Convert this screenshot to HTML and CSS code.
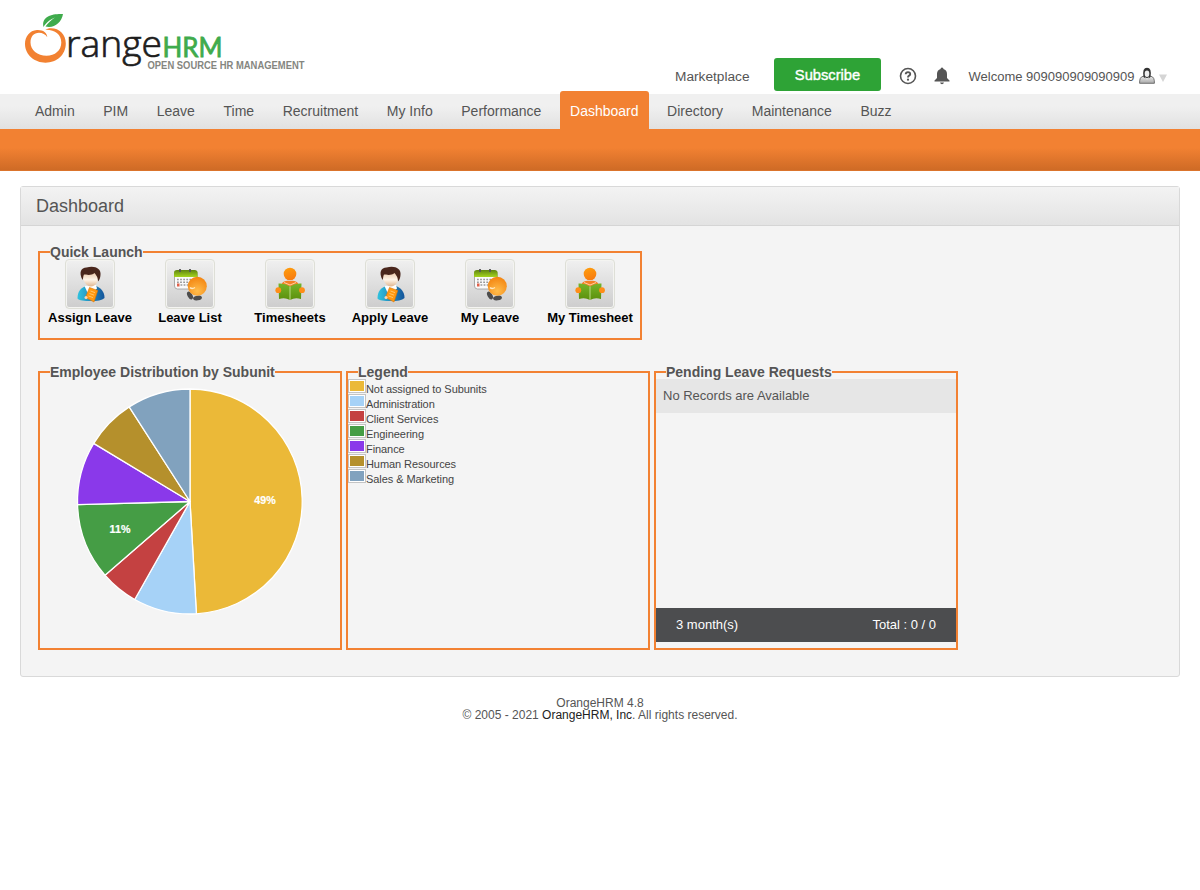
FILE: index.html
```html
<!DOCTYPE html>
<html lang="en">
<head>
<meta charset="utf-8">
<title>OrangeHRM</title>
<link rel="stylesheet" href="styles.css">
</head>
<body>
<svg class="defs" width="0" height="0">
  <defs>
    <linearGradient id="gOrange" x1="0" y1="0" x2="0.3" y2="1"><stop offset="0" stop-color="#ff9f0c"/><stop offset="1" stop-color="#f87d10"/></linearGradient>
    <radialGradient id="gBall" cx=".5" cy=".75" r=".75"><stop offset="0" stop-color="#ffbd4c"/><stop offset="1" stop-color="#f3830f"/></radialGradient>
    <linearGradient id="gGreen" x1="0" y1="0" x2="0" y2="1"><stop offset="0" stop-color="#76b52a"/><stop offset="1" stop-color="#5c8f0c"/></linearGradient>
    <linearGradient id="gCal" x1="0" y1="0" x2="0" y2="1"><stop offset="0" stop-color="#5e8510"/><stop offset="1" stop-color="#a5d51f"/></linearGradient>
    <linearGradient id="gBlue" x1="0" y1="0" x2="1" y2="0"><stop offset="0" stop-color="#30c3df"/><stop offset="1" stop-color="#14549a"/></linearGradient>
    <linearGradient id="gSkin" x1="0" y1="0" x2="0" y2="1"><stop offset="0" stop-color="#dfb48f"/><stop offset=".6" stop-color="#fff4e8"/><stop offset="1" stop-color="#dfb58f"/></linearGradient>
    <linearGradient id="gUser" x1="0" y1="0" x2="0" y2="1"><stop offset="0" stop-color="#eee"/><stop offset="1" stop-color="#aaa"/></linearGradient>
  </defs>
  <symbol id="person" viewBox="0 0 48 48">
    <path d="M11.500 38.500C11.500 31 15 28 20 26L30 26C34.500 28 38.500 31 38.500 38C36 40.500 31 41 25 41C18 41 13 40.500 11.500 38.500Z" fill="url(#gBlue)"/>
    <path d="M18.500 26L23 36L31 28.500L30 25Z" fill="#fff"/>
    <path d="M16.500 14C16.500 8 32 8 33 15C33 21 29.500 26.500 25 26.500C20.500 26.500 16 20 16.500 14Z" fill="url(#gSkin)"/>
    <path d="M16.500 20C12.500 12 15 8 20.500 7.500C28 5 35.500 8 34.500 15C34.300 18 33.500 20 32 21.500C32 17 30 15 28.500 13C25 16 20 14.500 18 14.500C17 16 17.500 18 16.500 20Z" fill="#49261c"/>
    <path d="M23.500 27.500L31.800 30.500L28 42L19.500 37.500Z" fill="#ff9811" stroke="#d77409" stroke-width=".6"/>
    <path d="M24.500 31L29 32.600M23.500 33.500L28 35.100M22.500 36L27 37.600" stroke="#ffd27f" stroke-width=".8"/>
    <circle cx="20" cy="37.500" r="1.500" fill="#f9d4b4"/>
  </symbol>
  <symbol id="calendar" viewBox="0 0 48 48">
    <rect x="8.500" y="11" width="23" height="18" rx="3" fill="#fafafa" stroke="#999" stroke-width=".8"/>
    <path d="M8 17V12.500Q8 10 11 10H28.500Q31.500 10 31.500 12.500V17Z" fill="url(#gCal)"/>
    <path d="M14 9V12M24 9V12" stroke="#555" stroke-width="1.800"/>
    <path d="M11 19.500H29M11 22.300H25M14.500 25H23" stroke="#999" stroke-width="1.400" stroke-dasharray="1.800 1.300"/>
    <rect x="11" y="23.500" width="2.500" height="3" fill="#e0604a"/>
    <ellipse cx="24" cy="35.500" rx="4.200" ry="2.400" transform="rotate(60 24 35.500)" fill="#4d4d4d"/>
    <ellipse cx="31.500" cy="38" rx="4.500" ry="2.400" transform="rotate(-10 31.500 38)" fill="#4d4d4d"/>
    <circle cx="31.300" cy="26.200" r="9.500" fill="url(#gBall)"/>
    <path d="M24 27.500Q26 29.500 29 27.500" stroke="#ffe9c4" stroke-width="1.500" fill="none"/>
  </symbol>
  <symbol id="reader" viewBox="0 0 48 48">
    <path d="M15.500 24Q18 20 24 21Q30 20 32.500 24L24 27Z" fill="#f58023"/>
    <path d="M18 22.500L24 25L30 22.500" stroke="#fbd0a4" stroke-width="1" fill="none"/>
    <circle cx="24" cy="14" r="6.300" fill="url(#gOrange)"/>
    <path d="M12.500 23.500Q19 23 24 26.500Q29 23 35.500 23.500L35 39Q29 37 24 40Q19 37 13 39Z" fill="url(#gGreen)"/>
    <path d="M24 26.500V40" stroke="#bdda86" stroke-width="1"/>
    <circle cx="12.300" cy="30.200" r="2.900" fill="#ff8d18"/><circle cx="36" cy="30.200" r="2.900" fill="#ff8d18"/>
  </symbol>
</svg>

<header class="top">
  <svg class="logo" width="290" height="70" viewBox="0 0 290 70">
    <path d="M28.500 27C26 16 38 13.500 48 14C46.500 23 39 28.500 30.500 26.500C33 23 36 20 40 17.500C34 20 31 23 28.500 27Z" fill="#3fab4c"/>
    <path fill-rule="evenodd" d="M32.300 37.300C32 32.500 28 29.700 22 30C14.500 30.500 10 36.500 10 44C10 55 20 62.700 30.500 62.700C42 62.700 50.800 54.500 50.800 43.500C50.800 34.500 44.500 28.300 36 28.300C33.500 28.300 31.500 29 30.300 29.800C40 29.500 46.300 34.500 46.300 42.500C46.300 50.500 40 55.700 31.500 55.700C22.500 55.700 15.500 50 15.500 42.500C15.500 36.500 19 32.800 24 32.800C27.500 32.800 30.500 34.500 32.300 37.300Z" fill="#f28131"/>
    <text class="logo-range" x="51" y="57" textLength="96" lengthAdjust="spacingAndGlyphs">range</text>
    <text class="logo-hrm" x="147.500" y="56.700" textLength="60" lengthAdjust="spacingAndGlyphs">HRM</text>
    <text class="logo-tag" x="132.500" y="69" textLength="157" lengthAdjust="spacingAndGlyphs">OPEN SOURCE HR MANAGEMENT</text>
  </svg>
  <div class="tools">
    <span class="market">Marketplace</span>
    <span class="subscribe">Subscribe</span>
    <svg class="help" width="18" height="18" viewBox="0 0 18 18"><circle cx="9" cy="9" r="7.500" fill="none" stroke="#555" stroke-width="1.600"/><path d="M6.700 7.300Q6.800 5.100 9 5.100Q11.300 5.200 11.200 7.100Q11.100 8.200 9.800 8.900Q9 9.400 9 10.500" fill="none" stroke="#555" stroke-width="1.900"/><circle cx="9" cy="12.700" r="1.100" fill="#555"/></svg>
    <svg class="bell" width="16" height="18" viewBox="0 0 16 18"><path d="M6.600 2V1.500Q8-.3 9.400 1.500V2Q13 3 13 7V11L15.500 13.500V14.500H.5V13.500L3 11V7Q3 3 6.600 2ZM6 15.500H10Q9.500 17.200 8 17.200Q6.500 17.200 6 15.500Z" fill="#555"/></svg>
    <span class="welcome">Welcome 909090909090909</span>
    <svg class="user" width="16" height="17" viewBox="0 0 16 17"><path d="M.6 16.300Q.3 10 4 9.300L8 8.500L12 9.300Q15.700 10 15.400 16.300Z" fill="url(#gUser)" stroke="#555" stroke-width=".8"/><path d="M4.500 10Q3 .8 8 .8Q13 .8 11.500 10Q8 13 4.500 10Z" fill="#333"/><ellipse cx="8" cy="6.800" rx="2.300" ry="3.300" fill="#eee"/><path d="M6 10Q8 12 10 10L9.500 12Q8 13 6.500 12Z" fill="#ddd"/></svg>
    <svg class="caret" width="8" height="8" viewBox="0 0 8 8"><path d="M0 .5H8L4 8Z" fill="#d5d5d5"/></svg>
  </div>
</header>

<nav class="menu">
  <a>Admin</a><a>PIM</a><a>Leave</a><a>Time</a><a>Recruitment</a><a>My Info</a><a>Performance</a><a class="current">Dashboard</a><a>Directory</a><a>Maintenance</a><a>Buzz</a>
</nav>
<div class="band"></div>

<main class="panel">
  <h1>Dashboard</h1>
  <div class="body">
    <fieldset class="quick">
      <legend>Quick Launch</legend>
      <div class="launchers">
        <div class="launcher"><span class="tile"><svg width="48" height="48"><use href="#person"/></svg></span>Assign Leave</div>
        <div class="launcher"><span class="tile"><svg width="48" height="48"><use href="#calendar"/></svg></span>Leave List</div>
        <div class="launcher"><span class="tile"><svg width="48" height="48"><use href="#reader"/></svg></span>Timesheets</div>
        <div class="launcher"><span class="tile"><svg width="48" height="48"><use href="#person"/></svg></span>Apply Leave</div>
        <div class="launcher"><span class="tile"><svg width="48" height="48"><use href="#calendar"/></svg></span>My Leave</div>
        <div class="launcher"><span class="tile"><svg width="48" height="48"><use href="#reader"/></svg></span>My Timesheet</div>
      </div>
    </fieldset>
    <div class="widgets">
      <fieldset>
        <legend>Employee Distribution by Subunit</legend>
        <svg class="pie" width="300" height="260" viewBox="-150 -122.500 300 260">
          <g stroke="#fff" stroke-width="1.300" stroke-linejoin="round">
            <path d="M0 0V-112.500A112.500 112.500 0 0 1 6.400 112.300Z" fill="#ebb938"/>
            <path d="M0 0L6.400 112.300A112.500 112.500 0 0 1-55.300 98Z" fill="#a6d2f7"/>
            <path d="M0 0L-55.300 98A112.500 112.500 0 0 1-85 73.700Z" fill="#c44141"/>
            <path d="M0 0L-85 73.700A112.500 112.500 0 0 1-112.450 3.200Z" fill="#459d45"/>
            <path d="M0 0L-112.450 3.200A112.500 112.500 0 0 1-96.300-58.100Z" fill="#8a39ea"/>
            <path d="M0 0L-96.300-58.100A112.500 112.500 0 0 1-60.800-94.600Z" fill="#b5902c"/>
            <path d="M0 0L-60.800-94.600A112.500 112.500 0 0 1 0-112.500Z" fill="#81a2be"/>
          </g>
          <text x="75" y="2.500">49%</text><text x="-70" y="31.500">11%</text>
        </svg>
      </fieldset>
      <fieldset>
        <legend>Legend</legend>
        <ul class="keys">
          <li><i class="c1"></i>Not assigned to Subunits</li>
          <li><i class="c2"></i>Administration</li>
          <li><i class="c3"></i>Client Services</li>
          <li><i class="c4"></i>Engineering</li>
          <li><i class="c5"></i>Finance</li>
          <li><i class="c6"></i>Human Resources</li>
          <li><i class="c7"></i>Sales &amp; Marketing</li>
        </ul>
      </fieldset>
      <fieldset>
        <legend>Pending Leave Requests</legend>
        <div class="pending">
          <div class="empty">No Records are Available</div>
          <div class="totals"><span>3 month(s)</span><span>Total : 0 / 0</span></div>
        </div>
      </fieldset>
    </div>
  </div>
</main>
<footer>OrangeHRM 4.8<br>© 2005 - 2021 <a>OrangeHRM, Inc</a>. All rights reserved.</footer>
</body>
</html>
```
FILE: styles.css
```css
* { box-sizing: border-box; }
body { margin: 0; background: #fff; color: #555; font-family: "Liberation Sans", Arial, sans-serif; font-size: 14px; }
.defs { display: block; height: 0; }
.top { display: flex; justify-content: space-between; height: 94px; padding-left: 15px; }
.logo { flex: none; overflow: visible; }
.logo-range { font-family: "Open Sans", Lato, sans-serif; font-weight: 300; font-size: 36px; fill: #1d1d1d; stroke: #1d1d1d; stroke-width: .7px; }
.logo-hrm { font-family: Lato, sans-serif; font-size: 27px; fill: #3fab4c; stroke: #3fab4c; stroke-width: .8px; }
.logo-tag { font-weight: bold; font-size: 10px; fill: #85867f; }
.tools { display: flex; align-items: center; height: 33px; margin-top: 58px; padding-right: 33px; font-size: 13px; }
.tools > * { flex: none; }
.market { width: 75px; padding-top: 3px; font-size: 13.700px; white-space: nowrap; }
.subscribe { width: 107px; height: 33px; margin-left: 24px; border-radius: 3px; background: #2ea336; color: #fff; font-size: 14.700px; line-height: 34px; text-align: center; -webkit-text-stroke: .4px #fff; }
.help { margin: 3px 0 0 17.500px; }
.bell { margin: 3px 0 0 17px; }
.welcome { width: 167px; margin-left: 19px; padding-top: 3px; white-space: nowrap; }
.user { margin: 2px 0 0 3.500px; }
.caret { margin: 7px 0 0 4px; }
.menu { display: flex; align-items: flex-end; height: 35px; padding-left: 25px; background: linear-gradient(#f0f0f0 35%, #e1e1e1); }
.menu a { height: 35px; margin-right: 8.600px; padding: 0 10px; line-height: 34px; white-space: nowrap; }
.menu .current { height: 38px; padding-top: 3px; border-radius: 3px 3px 0 0; background: #f28132; color: #fff; }
.band { height: 42px; background: linear-gradient(#f28132 45%, #cf6b26 97%, #e37a30); }
.panel { height: 491px; margin: 15px 20px 0; border: 1px solid #d9d9d9; border-radius: 3px; background: #f4f4f4; }
h1 { height: 39px; margin: 0; padding-left: 15px; border-bottom: 1px solid #d5d5d5; background: linear-gradient(#f3f3f3, #e3e3e3); font-size: 18px; font-weight: normal; line-height: 38px; }
.body { padding: 19px 17px 0; }
fieldset { min-width: 0; margin: 0; padding: 0; border: 2px solid #f28132; }
legend { position: relative; height: 14px; margin-left: 10px; padding: 0; font-size: 14px; font-weight: bold; line-height: 14px; white-space: nowrap; }
.quick { width: 604px; height: 95px; }
.launchers { display: flex; }
.launcher { display: flex; flex-direction: column; align-items: center; width: 100px; color: #000; font-size: 13px; font-weight: bold; line-height: 17px; white-space: nowrap; }
.tile { width: 50px; height: 50px; border: 1px solid #dedfd7; border-radius: 4px; background: linear-gradient(#f0f0f0, #cdcdcd); box-shadow: inset 0 0 0 1px #f4f4f1; }
.tile svg { display: block; }
.widgets { display: flex; gap: 4px; margin-top: 25px; }
.widgets fieldset { width: 304px; height: 285px; }
.pie { display: block; }
.pie text { fill: #fff; stroke: #fff; stroke-width: .2px; font-size: 10.700px; font-weight: bold; text-anchor: middle; }
.keys { margin: 0; padding: 0; list-style: none; color: #444; font-size: 11px; letter-spacing: -.07px; }
.keys li { display: flex; align-items: flex-start; height: 15px; line-height: 20px; }
.keys i { width: 18px; height: 14px; padding: 1px; border: 1px solid #c4c4c4; background-clip: content-box; box-shadow: inset 0 0 0 1px #fff; }
.c1 { background-color: #ebb938; }
.c2 { background-color: #a6d2f7; }
.c3 { background-color: #c44141; }
.c4 { background-color: #459d45; }
.c5 { background-color: #8a39ea; }
.c6 { background-color: #b5902c; }
.c7 { background-color: #81a2be; }
.pending { display: flex; flex-direction: column; justify-content: space-between; height: 263px; }
.empty { height: 34px; padding-left: 7px; background: #e6e6e6; font-size: 13px; line-height: 34px; }
.totals { display: flex; justify-content: space-between; height: 34px; padding: 0 20px; background: #4c4d4f; color: #fff; font-size: 13px; line-height: 33px; }
footer { margin-top: 20px; padding-bottom: 10px; font-size: 12px; line-height: 12px; text-align: center; }
footer a { color: #222; }
```
